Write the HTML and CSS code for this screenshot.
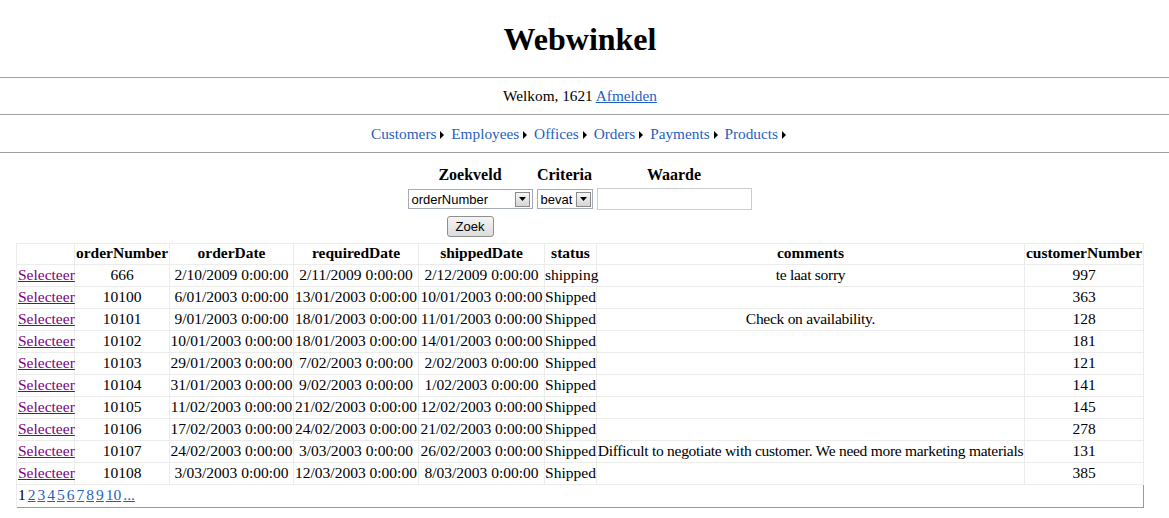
FILE: index.html
```html
<html>

<head>
  <meta content="text/html;charset=utf-8" http-equiv="Content-Type" />
  <title>Webwinkel</title>
  <link rel="stylesheet" href="styles.css">
</head>

<body>
  <div class="header">
    <h1>Webwinkel</h1>
  </div>

  <div class="bar welcome">
    Welkom, 1621 <a href="#">Afmelden</a>
  </div>

  <div class="bar nav">
    <a href="#">Customers</a><svg class="arrow" width="4" height="8" viewBox="0 0 4 8"><path d="M0 0 L4 4 L0 8 Z" /></svg>
    <a href="#">Employees</a><svg class="arrow" width="4" height="8" viewBox="0 0 4 8"><path d="M0 0 L4 4 L0 8 Z" /></svg>
    <a href="#">Offices</a><svg class="arrow" width="4" height="8" viewBox="0 0 4 8"><path d="M0 0 L4 4 L0 8 Z" /></svg>
    <a href="#">Orders</a><svg class="arrow" width="4" height="8" viewBox="0 0 4 8"><path d="M0 0 L4 4 L0 8 Z" /></svg>
    <a href="#">Payments</a><svg class="arrow" width="4" height="8" viewBox="0 0 4 8"><path d="M0 0 L4 4 L0 8 Z" /></svg>
    <a href="#">Products</a><svg class="arrow" width="4" height="8" viewBox="0 0 4 8"><path d="M0 0 L4 4 L0 8 Z" /></svg>
  </div>

  <div class="search">
    <div class="search-grid">
      <div class="label">Zoekveld</div>
      <div class="label">Criteria</div>
      <div class="label">Waarde</div>

      <div class="select wide">
        <span class="value">orderNumber</span>
        <span class="drop"><svg width="7" height="4" viewBox="0 0 7 4"><path d="M0 0 L7 0 L3.5 4 Z" /></svg></span>
      </div>
      <div class="select">
        <span class="value">bevat</span>
        <span class="drop"><svg width="7" height="4" viewBox="0 0 7 4"><path d="M0 0 L7 0 L3.5 4 Z" /></svg></span>
      </div>
      <input class="textbox" type="text" />

      <div class="button-cell"><button>Zoek</button></div>
    </div>
  </div>

  <div class="grid-wrap">
    <table class="grid">
      <colgroup>
        <col style="width: 58px">
        <col style="width: 95px">
        <col style="width: 124px">
        <col style="width: 125px">
        <col style="width: 126px">
        <col style="width: 52px">
        <col style="width: 428px">
        <col style="width: 119px">
      </colgroup>
      <thead>
        <tr>
          <th></th>
          <th>orderNumber</th>
          <th>orderDate</th>
          <th>requiredDate</th>
          <th>shippedDate</th>
          <th>status</th>
          <th>comments</th>
          <th>customerNumber</th>
        </tr>
      </thead>
      <tbody>
        <tr>
          <td><a class="select-link" href="#">Selecteer</a></td>
          <td>666</td><td>2/10/2009 0:00:00</td><td>2/11/2009 0:00:00</td><td>2/12/2009 0:00:00</td>
          <td>shipping</td><td class="comment">te laat sorry</td><td>997</td>
        </tr>
        <tr>
          <td><a class="select-link" href="#">Selecteer</a></td>
          <td>10100</td><td>6/01/2003 0:00:00</td><td>13/01/2003 0:00:00</td><td>10/01/2003 0:00:00</td>
          <td>Shipped</td><td class="comment"></td><td>363</td>
        </tr>
        <tr>
          <td><a class="select-link" href="#">Selecteer</a></td>
          <td>10101</td><td>9/01/2003 0:00:00</td><td>18/01/2003 0:00:00</td><td>11/01/2003 0:00:00</td>
          <td>Shipped</td><td class="comment">Check on availability.</td><td>128</td>
        </tr>
        <tr>
          <td><a class="select-link" href="#">Selecteer</a></td>
          <td>10102</td><td>10/01/2003 0:00:00</td><td>18/01/2003 0:00:00</td><td>14/01/2003 0:00:00</td>
          <td>Shipped</td><td class="comment"></td><td>181</td>
        </tr>
        <tr>
          <td><a class="select-link" href="#">Selecteer</a></td>
          <td>10103</td><td>29/01/2003 0:00:00</td><td>7/02/2003 0:00:00</td><td>2/02/2003 0:00:00</td>
          <td>Shipped</td><td class="comment"></td><td>121</td>
        </tr>
        <tr>
          <td><a class="select-link" href="#">Selecteer</a></td>
          <td>10104</td><td>31/01/2003 0:00:00</td><td>9/02/2003 0:00:00</td><td>1/02/2003 0:00:00</td>
          <td>Shipped</td><td class="comment"></td><td>141</td>
        </tr>
        <tr>
          <td><a class="select-link" href="#">Selecteer</a></td>
          <td>10105</td><td>11/02/2003 0:00:00</td><td>21/02/2003 0:00:00</td><td>12/02/2003 0:00:00</td>
          <td>Shipped</td><td class="comment"></td><td>145</td>
        </tr>
        <tr>
          <td><a class="select-link" href="#">Selecteer</a></td>
          <td>10106</td><td>17/02/2003 0:00:00</td><td>24/02/2003 0:00:00</td><td>21/02/2003 0:00:00</td>
          <td>Shipped</td><td class="comment"></td><td>278</td>
        </tr>
        <tr>
          <td><a class="select-link" href="#">Selecteer</a></td>
          <td>10107</td><td>24/02/2003 0:00:00</td><td>3/03/2003 0:00:00</td><td>26/02/2003 0:00:00</td>
          <td>Shipped</td><td class="comment">Difficult to negotiate with customer. We need more marketing materials</td><td>131</td>
        </tr>
        <tr>
          <td><a class="select-link" href="#">Selecteer</a></td>
          <td>10108</td><td>3/03/2003 0:00:00</td><td>12/03/2003 0:00:00</td><td>8/03/2003 0:00:00</td>
          <td>Shipped</td><td class="comment"></td><td>385</td>
        </tr>
        <tr class="pager-row">
          <td colspan="8">
            <div class="pager">
              <span>1</span>
              <a href="#">2</a><a href="#">3</a><a href="#">4</a><a href="#">5</a><a href="#">6</a>
              <a href="#">7</a><a href="#">8</a><a href="#">9</a><a href="#">10</a><a href="#">...</a>
            </div>
          </td>
        </tr>
      </tbody>
    </table>
  </div>
</body>

</html>
```

FILE: styles.css
```css
html {
  font-family: "Liberation Serif", "Times New Roman", serif;
  font-size: 15.3px;
  color: #000;
}

body {
  margin: 0;
  background: #fff;
}

a {
  color: #1f5fc4;
}

.header {
  height: 77px;
  border-bottom: 1px solid #a0a0a0;
  display: flex;
  align-items: center;
  justify-content: center;
  padding-right: 9px;
}

h1 {
  margin: 0;
  font-size: 32px;
  line-height: 1;
}

.bar {
  text-align: center;
  line-height: 18px;
  padding: 9px 9px 9px 0;
  border-bottom: 1px solid #a0a0a0;
}

.nav {
  padding-top: 10px;
}

.nav a {
  text-decoration: none;
}

.nav .arrow {
  margin: 0 3px 0 4px;
  vertical-align: 0;
}

/* zoekformulier */

.search {
  display: flex;
  justify-content: center;
  padding: 13px 10px 0 0;
}

.search-grid {
  display: grid;
  grid-template-columns: 125px 56px 155px;
  column-gap: 4px;
  align-items: center;
}

.label {
  font-weight: bold;
  font-size: 16px;
  text-align: center;
  line-height: 18px;
  margin-bottom: 4px;
}

.select {
  display: flex;
  align-items: center;
  height: 20px;
  box-sizing: border-box;
  border: 1px solid #a5acb5;
  background: #fff;
  font-family: "Liberation Sans", Arial, sans-serif;
  font-size: 13px;
  padding: 1px;
}

.select .value {
  flex-grow: 1;
  padding-left: 2px;
}

.select .drop {
  width: 15px;
  height: 15px;
  box-sizing: border-box;
  border: 1px solid #8a8a8a;
  background: linear-gradient(#f6f6f6, #d6d6d6);
  display: flex;
  align-items: center;
  justify-content: center;
}

.select.wide .drop {
  margin-right: 1px;
}

.textbox {
  width: 155px;
  height: 22px;
  box-sizing: border-box;
  border: 1px solid #c9cdd2;
  margin: 0;
}

.button-cell {
  text-align: center;
  padding-top: 6px;
}

button {
  font-family: "Liberation Sans", Arial, sans-serif;
  font-size: 13px;
  width: 47px;
  height: 21px;
  padding: 0;
  border: 1px solid #8e8f8f;
  border-radius: 3px;
  background: linear-gradient(#f4f4f4, #dcdcdc);
  color: #000;
}

/* gridview */

.grid-wrap {
  padding: 6px 17px 0 16px;
}

.grid {
  width: 1127px;
  table-layout: fixed;
  border-collapse: collapse;
  font-size: 15.5px;
  border-top: 1px solid #e8e8e8;
  border-left: 1px solid #e8e8e8;
  border-right: 1px solid #9a9a9a;
  border-bottom: 1px solid #9a9a9a;
}

.grid th,
.grid td {
  border: 1px solid #ececec;
  padding: 0 0 2px;
  height: 22px;
  line-height: 18px;
  text-align: center;
  white-space: nowrap;
}

.grid th {
  height: 21px;
  font-weight: bold;
}

.grid td:first-child {
  text-align: left;
  padding-left: 1px;
}

.grid td.comment {
  letter-spacing: -0.28px;
}

.select-link {
  color: #800080;
}

.pager-row td {
  border-right: none;
  border-bottom: none;
  padding-left: 2px;
  height: 23px;
}

.pager {
  display: flex;
  gap: 2px;
}
```
